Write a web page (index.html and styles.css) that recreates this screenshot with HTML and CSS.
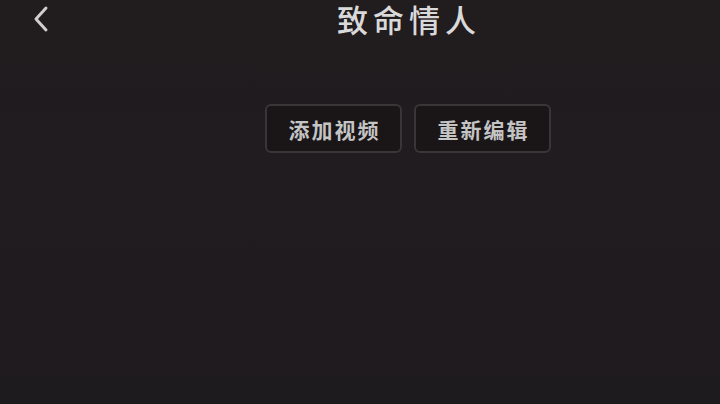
FILE: index.html
```html
<!DOCTYPE html>
<html lang="zh">
<head>
<meta charset="utf-8">
<link rel="stylesheet" href="styles.css">
</head>
<body>
<div class="page">
  <header class="topbar">
    <button class="back" aria-label="返回">
      <svg width="20" height="30" viewBox="0 0 20 30"><path d="M15 4 L5 15 L15 26" fill="none" stroke="#cfcfcf" stroke-width="3" stroke-linecap="round" stroke-linejoin="round"/></svg>
    </button>
    <h1 class="title">致命情人</h1>
  </header>
  <div class="actions">
    <button class="btn">添加视频</button>
    <button class="btn">重新编辑</button>
  </div>
</div>
</body>
</html>
```
FILE: styles.css
```css
html, body {
  margin: 0;
  padding: 0;
  background: #1f1b1e;
  width: 720px;
  height: 404px;
  overflow: hidden;
}
.page {
  font-family: "Noto Sans CJK SC", "Noto Sans", sans-serif;
  height: 404px;
  background: linear-gradient(180deg, #211c1e 0%, #201c1f 50%, #1e1b1f 100%);
}
.topbar {
  display: flex;
  align-items: center;
  padding: 0 0 0 31px;
  height: 38px;
}
.back {
  background: none;
  border: 0;
  padding: 0;
  width: 22px;
  height: 30px;
  display: flex;
  align-items: center;
}
.title {
  margin: 0 0 0 284px;
  font-size: 31px;
  font-weight: 500;
  color: #d9d9d9;
  letter-spacing: 5px;
  line-height: 36px;
  white-space: nowrap;
}
.actions {
  display: flex;
  gap: 12px;
  margin-top: 66px;
  padding-left: 265px;
}
.btn {
  width: 137px;
  height: 49px;
  box-sizing: border-box;
  border: 2px solid #39363a;
  border-radius: 6px;
  background: #1a1618;
  color: #c4c4c4;
  font-family: "Noto Sans CJK SC", sans-serif;
  font-size: 21px;
  font-weight: 700;
  letter-spacing: 2px;
  padding: 0 0 0 2px;
}
```
